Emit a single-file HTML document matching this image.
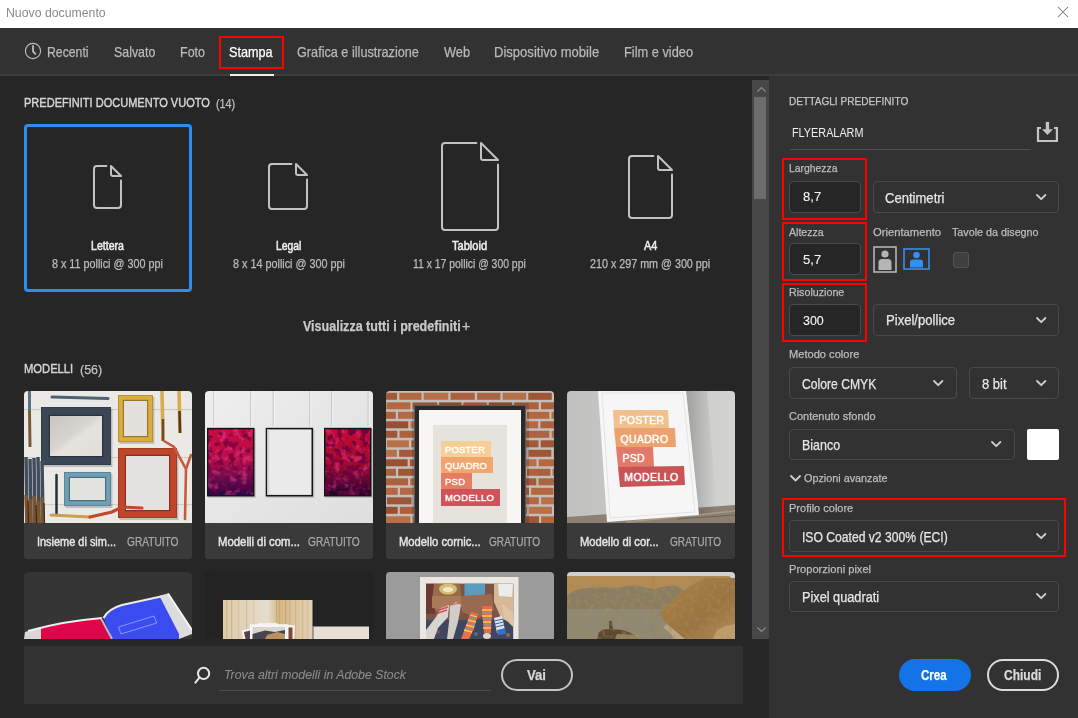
<!DOCTYPE html><html><head><meta charset="utf-8"><style>
html,body{margin:0;padding:0;}
body{width:1078px;height:718px;overflow:hidden;position:relative;background:#262626;font-family:"Liberation Sans",sans-serif;}
.t{position:absolute;white-space:nowrap;line-height:1;transform-origin:0 0;-webkit-text-stroke:0.25px currentColor;}
.b{position:absolute;box-sizing:border-box;}
.th{position:absolute;overflow:hidden;}
</style></head><body>
<div class="b" style="left:0px;top:0px;width:1078px;height:28px;background:#fff;"></div>
<div class="t" style="left:6.2px;top:6.7px;font-size:12px;color:#8a8a8a;transform:scaleX(1.023);-webkit-text-stroke:0;">Nuovo documento</div>
<svg class="b" style="left:1057px;top:6px" width="12" height="12"><path d="M1,1 L11,11 M11,1 L1,11" stroke="#7a7a7a" stroke-width="1.05"/></svg>
<div class="b" style="left:0px;top:28px;width:1078px;height:46px;background:#323232;"></div>
<div class="b" style="left:0px;top:74px;width:1078px;height:2px;background:#3f3f3f;"></div>
<svg class="b" style="left:24px;top:42px" width="18" height="18"><circle cx="9" cy="9" r="7.6" fill="none" stroke="#bdbdbd" stroke-width="1.15"/><path d="M9,3.3 L9,9.3 L11.8,12.3" fill="none" stroke="#c4c4c4" stroke-width="1.7"/></svg>
<div class="t" style="left:47.0px;top:44.7px;font-size:14.5px;color:#b9b9b9;transform:scaleX(0.844);">Recenti</div>
<div class="t" style="left:113.5px;top:44.7px;font-size:14.5px;color:#b9b9b9;transform:scaleX(0.854);">Salvato</div>
<div class="t" style="left:180.2px;top:44.7px;font-size:14.5px;color:#b9b9b9;transform:scaleX(0.862);">Foto</div>
<div class="t" style="left:297.3px;top:44.7px;font-size:14.5px;color:#b9b9b9;transform:scaleX(0.874);">Grafica e illustrazione</div>
<div class="t" style="left:443.6px;top:44.7px;font-size:14.5px;color:#b9b9b9;transform:scaleX(0.880);">Web</div>
<div class="t" style="left:494.0px;top:44.7px;font-size:14.5px;color:#b9b9b9;transform:scaleX(0.900);">Dispositivo mobile</div>
<div class="t" style="left:623.7px;top:44.7px;font-size:14.5px;color:#b9b9b9;transform:scaleX(0.883);">Film e video</div>
<div class="t" style="left:229.4px;top:44.7px;font-size:14.5px;color:#ffffff;transform:scaleX(0.873);">Stampa</div>
<div class="b" style="left:230px;top:74px;width:44px;height:2px;background:#f0f0f0;"></div>
<div class="b" style="left:219px;top:36px;width:65px;height:33px;border:2px solid #ff0000;"></div>
<div class="b" style="left:0px;top:76px;width:752px;height:642px;background:#262626;"></div>
<div class="t" style="left:24.0px;top:97.1px;font-size:12px;color:#d6d6d6;transform:scaleX(0.919);-webkit-text-stroke:0.4px currentColor;">PREDEFINITI DOCUMENTO VUOTO</div>
<div class="t" style="left:215.9px;top:97.6px;font-size:12px;color:#c0c0c0;transform:scaleX(0.895);">(14)</div>
<div class="b" style="left:24px;top:124px;width:168px;height:168px;border:3px solid #2e8ef0;border-radius:4px;"></div>
<svg class="b" style="left:93px;top:165px" width="29" height="44"><path d="M13.4,1 L4,1 Q1,1 1,4 L1,40 Q1,43 4,43 L25,43 Q28,43 28,40 L28,15.6" fill="none" stroke="#c2c2c2" stroke-width="2" stroke-linecap="round"/><path d="M18,1 L28,11 L20,11 Q18,11 18,9 Z" fill="none" stroke="#c2c2c2" stroke-width="2" stroke-linejoin="round"/></svg>
<svg class="b" style="left:268px;top:163px" width="40" height="47"><path d="M23.4,1 L4,1 Q1,1 1,4 L1,43 Q1,46 4,46 L36,46 Q39,46 39,43 L39,16.6" fill="none" stroke="#c2c2c2" stroke-width="2" stroke-linecap="round"/><path d="M28,1 L39,12 L30,12 Q28,12 28,10 Z" fill="none" stroke="#c2c2c2" stroke-width="2" stroke-linejoin="round"/></svg>
<svg class="b" style="left:441px;top:142px" width="58" height="89"><path d="M35.4,1 L4,1 Q1,1 1,4 L1,85 Q1,88 4,88 L54,88 Q57,88 57,85 L57,22.6" fill="none" stroke="#c2c2c2" stroke-width="2" stroke-linecap="round"/><path d="M40,1 L57,18 L42,18 Q40,18 40,16 Z" fill="none" stroke="#c2c2c2" stroke-width="2" stroke-linejoin="round"/></svg>
<svg class="b" style="left:628px;top:155px" width="45" height="64"><path d="M25.4,1 L4,1 Q1,1 1,4 L1,60 Q1,63 4,63 L41,63 Q44,63 44,60 L44,19.6" fill="none" stroke="#c2c2c2" stroke-width="2" stroke-linecap="round"/><path d="M30,1 L44,15 L32,15 Q30,15 30,13 Z" fill="none" stroke="#c2c2c2" stroke-width="2" stroke-linejoin="round"/></svg>
<div class="t" style="left:91.0px;top:240.0px;font-size:12px;color:#f0f0f0;transform:scaleX(0.883);-webkit-text-stroke:0.5px currentColor;">Lettera</div>
<div class="t" style="left:52.3px;top:258.1px;font-size:12px;color:#bcbcbc;transform:scaleX(0.898);">8 x 11 pollici @ 300 ppi</div>
<div class="t" style="left:275.9px;top:240.0px;font-size:12px;color:#f0f0f0;transform:scaleX(0.865);-webkit-text-stroke:0.5px currentColor;">Legal</div>
<div class="t" style="left:232.5px;top:258.1px;font-size:12px;color:#bcbcbc;transform:scaleX(0.901);">8 x 14 pollici @ 300 ppi</div>
<div class="t" style="left:452.3px;top:240.0px;font-size:12px;color:#f0f0f0;transform:scaleX(0.923);-webkit-text-stroke:0.5px currentColor;">Tabloid</div>
<div class="t" style="left:412.9px;top:258.1px;font-size:12px;color:#bcbcbc;transform:scaleX(0.867);">11 x 17 pollici @ 300 ppi</div>
<div class="t" style="left:643.8px;top:240.0px;font-size:12px;color:#f0f0f0;transform:scaleX(0.906);-webkit-text-stroke:0.5px currentColor;">A4</div>
<div class="t" style="left:590.4px;top:258.1px;font-size:12px;color:#bcbcbc;transform:scaleX(0.895);">210 x 297 mm @ 300 ppi</div>
<div class="t" style="left:302.9px;top:318.5px;font-size:14px;color:#c9c9c9;font-weight:bold;transform:scaleX(0.894);">Visualizza tutti i predefiniti</div>
<div class="t" style="left:461.5px;top:318.5px;font-size:14px;color:#c9c9c9;transform:scaleX(1.015);">+</div>
<div class="t" style="left:23.8px;top:363.4px;font-size:12px;color:#d6d6d6;transform:scaleX(0.934);-webkit-text-stroke:0.4px currentColor;">MODELLI</div>
<div class="t" style="left:79.5px;top:364.0px;font-size:12px;color:#c0c0c0;transform:scaleX(1.040);">(56)</div>
<div class="th" style="left:24px;top:391px;width:168px;height:132px;background:transparent;border-radius:4px 4px 0 0;"><svg width="168" height="132" style="display:block"><defs><linearGradient id="g1" x1="0" y1="0" x2="1" y2="1"><stop offset="0" stop-color="#c8c5c0"/><stop offset="0.45" stop-color="#d8d5d0"/><stop offset="0.55" stop-color="#e6e3de"/><stop offset="1" stop-color="#e0ded9"/></linearGradient></defs><rect width="168" height="132" fill="#ebe9e6"/><rect x="0" y="18" width="168" height="1.2" fill="#cfccc8"/><rect x="0" y="66" width="168" height="1.2" fill="#cfccc8"/><rect x="0" y="113" width="168" height="1.2" fill="#cfccc8"/><rect x="18.5" y="18" width="70" height="58" fill="rgba(0,0,0,0.18)"/><rect x="17" y="16" width="70" height="58" fill="#3b4757"/><rect x="26" y="25" width="52" height="40" fill="url(#g1)"/><rect x="25.4" y="24.4" width="53.2" height="41.2" fill="none" stroke="rgba(0,0,0,0.3)" stroke-width="1.2"/><rect x="17.5" y="16.5" width="69" height="57" fill="none" stroke="rgba(0,0,0,0.15)" stroke-width="1"/><rect x="95.5" y="6" width="35" height="47" fill="rgba(0,0,0,0.18)"/><rect x="94" y="4" width="35" height="47" fill="#d9ad3e"/><rect x="100" y="10" width="23" height="35" fill="#e4e1dc"/><rect x="99.4" y="9.4" width="24.2" height="36.2" fill="none" stroke="rgba(0,0,0,0.3)" stroke-width="1.2"/><rect x="94.5" y="4.5" width="34" height="46" fill="none" stroke="rgba(0,0,0,0.15)" stroke-width="1"/><rect x="95.5" y="59" width="59" height="70" fill="rgba(0,0,0,0.18)"/><rect x="94" y="57" width="59" height="70" fill="#c0462a"/><rect x="102" y="65" width="43" height="54" fill="#e4e2de"/><rect x="101.4" y="64.4" width="44.2" height="55.2" fill="none" stroke="rgba(0,0,0,0.3)" stroke-width="1.2"/><rect x="94.5" y="57.5" width="58" height="69" fill="none" stroke="rgba(0,0,0,0.15)" stroke-width="1"/><rect x="41.5" y="83" width="47" height="34" fill="rgba(0,0,0,0.18)"/><rect x="40" y="81" width="47" height="34" fill="#6e9fb4"/><rect x="46" y="87" width="35" height="22" fill="#e4e2de"/><rect x="45.4" y="86.4" width="36.2" height="23.2" fill="none" stroke="rgba(0,0,0,0.3)" stroke-width="1.2"/><rect x="40.5" y="81.5" width="46" height="33" fill="none" stroke="rgba(0,0,0,0.15)" stroke-width="1"/><path d="M28,6 L84,7.5" stroke="#4d6272" stroke-width="3.2" stroke-linecap="round"/><path d="M5.5,0 L5.5,20" stroke="#5b7282" stroke-width="3"/><path d="M5.5,20 L6,56" stroke="#7b5a3a" stroke-width="3"/><path d="M2,66 L3,132 M6,68 L7,132 M10,67 L11,132 M14,66 L15,132 M18,70 L19,132" stroke="#3f4d5c" stroke-width="3.5"/><path d="M2,104 L3,132 M6,108 L7,132 M10,105 L11,132 M14,110 L15,132 M18,106 L19,132" stroke="#7a5430" stroke-width="3.5"/><path d="M4,110 L4.5,132 M12,114 L12.5,132 M20,112 L20.5,132" stroke="#3a2818" stroke-width="1.2"/><path d="M32.5,84 L32.5,124" stroke="#26303a" stroke-width="2.5" stroke-linecap="round"/><path d="M138,0 L139,50" stroke="#d6ad4e" stroke-width="3.6"/><path d="M139,28 L139,50" stroke="#6a4a2a" stroke-width="2.5"/><path d="M155,0 L156,42" stroke="#d6ad4e" stroke-width="3.6"/><path d="M155.5,20 L156,42" stroke="#5a3a22" stroke-width="2.6"/><path d="M140,50 L150,56 L162,78 L167,64 M162,78 L161,128" fill="none" stroke="#c45c40" stroke-width="2.6" stroke-linecap="round"/><path d="M27,124 L66,126" stroke="#c8a050" stroke-width="3.2" stroke-linecap="round"/><path d="M66,126 L88,121 L98,116 L118,117" fill="none" stroke="#c0482c" stroke-width="3.2" stroke-linecap="round"/></svg></div>
<div class="th" style="left:205px;top:391px;width:168px;height:132px;background:transparent;border-radius:4px 4px 0 0;"><svg width="168" height="132" style="display:block"><defs><linearGradient id="w2" x1="0" y1="0" x2="1" y2="1"><stop offset="0" stop-color="#eeeeee"/><stop offset="1" stop-color="#dedede"/></linearGradient><linearGradient id="r2a" x1="0" y1="0" x2="0" y2="1"><stop offset="0" stop-color="#c80c40"/><stop offset="0.45" stop-color="#b80e48"/><stop offset="0.75" stop-color="#6a0c4c"/><stop offset="1" stop-color="#24084a"/></linearGradient><linearGradient id="r2b" x1="0" y1="0" x2="0" y2="1"><stop offset="0" stop-color="#c40a34"/><stop offset="0.5" stop-color="#a40a30"/><stop offset="0.8" stop-color="#580836"/><stop offset="1" stop-color="#1a0428"/></linearGradient><filter id="blot" x="0" y="0" width="100%" height="100%"><feTurbulence type="fractalNoise" baseFrequency="0.16" numOctaves="3" seed="5"/><feColorMatrix type="matrix" values="0 0 0 0 0.14  0 0 0 0 0  0 0 0 0 0.05  5 0 0 0 -2.4"/></filter><filter id="blot2" x="0" y="0" width="100%" height="100%"><feTurbulence type="fractalNoise" baseFrequency="0.14" numOctaves="3" seed="9"/><feColorMatrix type="matrix" values="0 0 0 0 0.95  0 0 0 0 0.05  0 0 0 0 0.3  0 4.5 0 0 -2.2"/></filter></defs><rect width="168" height="132" fill="url(#w2)"/><rect x="8" y="0" width="1.3" height="35" fill="#c8c8c8" opacity="0.9"/><rect x="9.3" y="0" width="1" height="35" fill="#f8f8f8" opacity="0.8"/><rect x="45" y="0" width="1.3" height="35" fill="#c8c8c8" opacity="0.9"/><rect x="46.3" y="0" width="1" height="35" fill="#f8f8f8" opacity="0.8"/><rect x="67.5" y="0" width="1.3" height="35" fill="#c8c8c8" opacity="0.9"/><rect x="68.8" y="0" width="1" height="35" fill="#f8f8f8" opacity="0.8"/><rect x="104" y="0" width="1.3" height="35" fill="#c8c8c8" opacity="0.9"/><rect x="105.3" y="0" width="1" height="35" fill="#f8f8f8" opacity="0.8"/><rect x="126" y="0" width="1.3" height="35" fill="#c8c8c8" opacity="0.9"/><rect x="127.3" y="0" width="1" height="35" fill="#f8f8f8" opacity="0.8"/><rect x="162.5" y="0" width="1.3" height="35" fill="#c8c8c8" opacity="0.9"/><rect x="163.8" y="0" width="1" height="35" fill="#f8f8f8" opacity="0.8"/><rect x="3" y="38" width="48" height="69" fill="rgba(0,0,0,0.12)"/><rect x="2" y="36.8" width="47.5" height="68.7" fill="#141414"/><rect x="3.6" y="38.4" width="44.3" height="65.5" fill="url(#r2a)"/><rect x="3.6" y="38.4" width="44.3" height="65.5" filter="url(#blot2)" opacity="0.45"/><rect x="3.6" y="38.4" width="44.3" height="65.5" filter="url(#blot)" opacity="0.75"/><rect x="120" y="38" width="48" height="69" fill="rgba(0,0,0,0.12)"/><rect x="119" y="36.8" width="47.5" height="68.7" fill="#141414"/><rect x="120.6" y="38.4" width="44.3" height="65.5" fill="url(#r2b)"/><rect x="120.6" y="38.4" width="44.3" height="65.5" filter="url(#blot2)" opacity="0.45"/><rect x="120.6" y="38.4" width="44.3" height="65.5" filter="url(#blot)" opacity="0.95"/><rect x="61.5" y="38" width="48" height="69" fill="rgba(0,0,0,0.12)"/><rect x="60.7" y="36.8" width="47.4" height="68.7" fill="#161616"/><rect x="62.3" y="38.4" width="44.2" height="65.5" fill="#eaeaea"/><rect x="62.3" y="38.4" width="2" height="65.5" fill="#d4d4d4"/></svg></div>
<div class="th" style="left:386px;top:391px;width:168px;height:132px;background:transparent;border-radius:4px 4px 0 0;"><svg width="168" height="132" style="display:block"><rect width="168" height="132" fill="#c4beb8"/><rect x="-0.2" y="-7.7" width="23.4" height="7" fill="#985034"/><rect x="25.4" y="-7.7" width="22.6" height="7" fill="#b87048"/><rect x="50.2" y="-7.7" width="23.9" height="7" fill="#985034"/><rect x="76.2" y="-7.7" width="22.3" height="7" fill="#a45a3a"/><rect x="100.7" y="-7.7" width="22.4" height="7" fill="#9e5636"/><rect x="125.3" y="-7.7" width="23.8" height="7" fill="#ac603e"/><rect x="151.3" y="-7.7" width="24.9" height="7" fill="#b26a46"/><rect x="-12.8" y="1.8" width="23.9" height="7" fill="#a45a3a"/><rect x="13.3" y="1.8" width="22.2" height="7" fill="#b4683f"/><rect x="37.7" y="1.8" width="24.6" height="7" fill="#b87048"/><rect x="64.5" y="1.8" width="24.3" height="7" fill="#ac603e"/><rect x="91.1" y="1.8" width="23.3" height="7" fill="#aa6444"/><rect x="116.6" y="1.8" width="23.6" height="7" fill="#b87048"/><rect x="142.3" y="1.8" width="23.5" height="7" fill="#9e5636"/><rect x="168.0" y="1.8" width="23.4" height="7" fill="#b4683f"/><rect x="0.4" y="11.3" width="24.1" height="7" fill="#b4683f"/><rect x="26.7" y="11.3" width="24.3" height="7" fill="#aa6444"/><rect x="53.2" y="11.3" width="22.1" height="7" fill="#9e5636"/><rect x="77.5" y="11.3" width="23.2" height="7" fill="#b4683f"/><rect x="102.9" y="11.3" width="23.2" height="7" fill="#9e5636"/><rect x="128.2" y="11.3" width="24.5" height="7" fill="#ac603e"/><rect x="155.0" y="11.3" width="22.6" height="7" fill="#ac603e"/><rect x="-13.6" y="20.8" width="23.4" height="7" fill="#ac603e"/><rect x="12.0" y="20.8" width="23.3" height="7" fill="#b26a46"/><rect x="37.5" y="20.8" width="24.3" height="7" fill="#b87048"/><rect x="64.0" y="20.8" width="23.0" height="7" fill="#9e5636"/><rect x="89.2" y="20.8" width="23.0" height="7" fill="#9e5636"/><rect x="114.4" y="20.8" width="24.3" height="7" fill="#b26a46"/><rect x="140.9" y="20.8" width="22.4" height="7" fill="#b4683f"/><rect x="165.5" y="20.8" width="22.0" height="7" fill="#b4683f"/><rect x="-0.2" y="30.3" width="22.5" height="7" fill="#985034"/><rect x="24.5" y="30.3" width="23.3" height="7" fill="#b87048"/><rect x="50.1" y="30.3" width="25.0" height="7" fill="#b87048"/><rect x="77.2" y="30.3" width="23.3" height="7" fill="#a45a3a"/><rect x="102.7" y="30.3" width="22.3" height="7" fill="#b26a46"/><rect x="127.2" y="30.3" width="25.0" height="7" fill="#b26a46"/><rect x="154.4" y="30.3" width="22.8" height="7" fill="#ac603e"/><rect x="-13.7" y="39.8" width="25.0" height="7" fill="#9e5636"/><rect x="13.5" y="39.8" width="22.6" height="7" fill="#ac603e"/><rect x="38.3" y="39.8" width="25.0" height="7" fill="#b26a46"/><rect x="65.5" y="39.8" width="22.1" height="7" fill="#b4683f"/><rect x="89.8" y="39.8" width="22.6" height="7" fill="#a45a3a"/><rect x="114.7" y="39.8" width="22.0" height="7" fill="#9e5636"/><rect x="138.9" y="39.8" width="24.5" height="7" fill="#aa6444"/><rect x="165.6" y="39.8" width="22.2" height="7" fill="#b26a46"/><rect x="0.9" y="49.3" width="22.0" height="7" fill="#b87048"/><rect x="25.2" y="49.3" width="23.1" height="7" fill="#aa6444"/><rect x="50.5" y="49.3" width="22.4" height="7" fill="#985034"/><rect x="75.1" y="49.3" width="24.5" height="7" fill="#985034"/><rect x="101.8" y="49.3" width="24.6" height="7" fill="#a45a3a"/><rect x="128.6" y="49.3" width="23.9" height="7" fill="#a45a3a"/><rect x="154.7" y="49.3" width="24.7" height="7" fill="#9e5636"/><rect x="-13.3" y="58.8" width="24.2" height="7" fill="#b87048"/><rect x="13.1" y="58.8" width="24.2" height="7" fill="#a45a3a"/><rect x="39.5" y="58.8" width="24.1" height="7" fill="#b87048"/><rect x="65.8" y="58.8" width="24.6" height="7" fill="#b26a46"/><rect x="92.6" y="58.8" width="23.3" height="7" fill="#b4683f"/><rect x="118.1" y="58.8" width="22.3" height="7" fill="#b4683f"/><rect x="142.6" y="58.8" width="22.7" height="7" fill="#9e5636"/><rect x="167.6" y="58.8" width="22.8" height="7" fill="#b26a46"/><rect x="-1.3" y="68.3" width="22.9" height="7" fill="#985034"/><rect x="23.8" y="68.3" width="24.8" height="7" fill="#a45a3a"/><rect x="50.8" y="68.3" width="22.4" height="7" fill="#b4683f"/><rect x="75.4" y="68.3" width="23.7" height="7" fill="#985034"/><rect x="101.3" y="68.3" width="22.8" height="7" fill="#b4683f"/><rect x="126.3" y="68.3" width="24.2" height="7" fill="#b87048"/><rect x="152.7" y="68.3" width="22.8" height="7" fill="#b4683f"/><rect x="-12.1" y="77.8" width="22.1" height="7" fill="#ac603e"/><rect x="12.2" y="77.8" width="23.1" height="7" fill="#9e5636"/><rect x="37.5" y="77.8" width="22.3" height="7" fill="#a45a3a"/><rect x="62.0" y="77.8" width="24.7" height="7" fill="#a45a3a"/><rect x="88.9" y="77.8" width="24.0" height="7" fill="#aa6444"/><rect x="115.0" y="77.8" width="23.8" height="7" fill="#a45a3a"/><rect x="141.0" y="77.8" width="23.4" height="7" fill="#ac603e"/><rect x="166.6" y="77.8" width="24.1" height="7" fill="#aa6444"/><rect x="-1.7" y="87.3" width="23.8" height="7" fill="#ac603e"/><rect x="24.3" y="87.3" width="23.4" height="7" fill="#b4683f"/><rect x="50.0" y="87.3" width="23.0" height="7" fill="#9e5636"/><rect x="75.1" y="87.3" width="22.2" height="7" fill="#b4683f"/><rect x="99.5" y="87.3" width="24.2" height="7" fill="#aa6444"/><rect x="125.9" y="87.3" width="24.4" height="7" fill="#a45a3a"/><rect x="152.5" y="87.3" width="23.1" height="7" fill="#aa6444"/><rect x="-12.9" y="96.8" width="24.6" height="7" fill="#b4683f"/><rect x="14.0" y="96.8" width="24.8" height="7" fill="#b26a46"/><rect x="41.0" y="96.8" width="24.6" height="7" fill="#ac603e"/><rect x="67.8" y="96.8" width="23.9" height="7" fill="#ac603e"/><rect x="93.9" y="96.8" width="23.1" height="7" fill="#b26a46"/><rect x="119.2" y="96.8" width="23.8" height="7" fill="#ac603e"/><rect x="145.2" y="96.8" width="22.3" height="7" fill="#b4683f"/><rect x="0.9" y="106.3" width="24.6" height="7" fill="#9e5636"/><rect x="27.7" y="106.3" width="23.2" height="7" fill="#aa6444"/><rect x="53.1" y="106.3" width="23.3" height="7" fill="#985034"/><rect x="78.6" y="106.3" width="23.6" height="7" fill="#b4683f"/><rect x="104.3" y="106.3" width="22.9" height="7" fill="#ac603e"/><rect x="129.5" y="106.3" width="23.4" height="7" fill="#b4683f"/><rect x="155.1" y="106.3" width="24.9" height="7" fill="#b87048"/><rect x="-11.1" y="115.8" width="22.8" height="7" fill="#985034"/><rect x="13.8" y="115.8" width="23.1" height="7" fill="#ac603e"/><rect x="39.1" y="115.8" width="24.0" height="7" fill="#a45a3a"/><rect x="65.4" y="115.8" width="23.6" height="7" fill="#b87048"/><rect x="91.1" y="115.8" width="24.0" height="7" fill="#aa6444"/><rect x="117.3" y="115.8" width="23.5" height="7" fill="#985034"/><rect x="143.0" y="115.8" width="23.0" height="7" fill="#b87048"/><rect x="168.2" y="115.8" width="22.6" height="7" fill="#9e5636"/><rect x="-0.1" y="125.3" width="24.6" height="7" fill="#b87048"/><rect x="26.7" y="125.3" width="22.7" height="7" fill="#b26a46"/><rect x="51.6" y="125.3" width="22.6" height="7" fill="#aa6444"/><rect x="76.4" y="125.3" width="23.5" height="7" fill="#a45a3a"/><rect x="102.1" y="125.3" width="24.1" height="7" fill="#ac603e"/><rect x="128.5" y="125.3" width="24.5" height="7" fill="#9e5636"/><rect x="155.1" y="125.3" width="23.4" height="7" fill="#b4683f"/><rect x="-11.6" y="134.8" width="24.5" height="7" fill="#b87048"/><rect x="15.1" y="134.8" width="23.9" height="7" fill="#b26a46"/><rect x="41.1" y="134.8" width="24.0" height="7" fill="#985034"/><rect x="67.4" y="134.8" width="23.0" height="7" fill="#985034"/><rect x="92.5" y="134.8" width="22.8" height="7" fill="#ac603e"/><rect x="117.6" y="134.8" width="24.0" height="7" fill="#ac603e"/><rect x="143.8" y="134.8" width="23.7" height="7" fill="#9e5636"/><rect x="26" y="12" width="117" height="130" fill="rgba(0,0,0,0.15)"/><rect x="28" y="14" width="112" height="120" fill="#2a2a2a"/><rect x="28.5" y="14.5" width="111" height="120" fill="none" stroke="#5a5a5a" stroke-width="1"/><rect x="33" y="19" width="102" height="115" fill="#f7f6f2"/><rect x="47" y="34" width="74" height="100" fill="#e6e3de"/><rect x="55" y="50" width="50" height="16" fill="#f6cf96"/><rect x="55" y="66" width="52" height="16" fill="#f1a66f"/><rect x="55" y="82" width="31" height="16" fill="#e67c64"/><rect x="55" y="98" width="59" height="17" fill="#cf5358"/><text x="59" y="61.8" textLength="40" lengthAdjust="spacing" style="font-family:Liberation Sans;font-size:9.5px;fill:#fff;stroke:#fff;stroke-width:0.35px">POSTER</text><text x="59" y="77.8" textLength="42" lengthAdjust="spacing" style="font-family:Liberation Sans;font-size:9.5px;fill:#fff;stroke:#fff;stroke-width:0.35px">QUADRO</text><text x="59" y="93.8" textLength="20" lengthAdjust="spacing" style="font-family:Liberation Sans;font-size:9.5px;fill:#fff;stroke:#fff;stroke-width:0.35px">PSD</text><text x="59" y="110.3" textLength="49" lengthAdjust="spacing" style="font-family:Liberation Sans;font-size:9.5px;fill:#fff;stroke:#fff;stroke-width:0.35px">MODELLO</text></svg></div>
<div class="th" style="left:567px;top:391px;width:168px;height:132px;background:transparent;border-radius:4px 4px 0 0;"><svg width="168" height="132" style="display:block"><defs><linearGradient id="w4" x1="0" y1="0" x2="1" y2="0"><stop offset="0" stop-color="#c0c0be"/><stop offset="0.5" stop-color="#cacac8"/><stop offset="1" stop-color="#d2d2d0"/></linearGradient><linearGradient id="sh4" x1="0" y1="0" x2="1" y2="0"><stop offset="0" stop-color="#000" stop-opacity="0.22"/><stop offset="1" stop-color="#000" stop-opacity="0"/></linearGradient></defs><rect width="168" height="132" fill="url(#w4)"/><polygon points="0,126 168,114 168,132 0,132" fill="#8c8072"/><path d="M60,131 L168,120" stroke="#a89a88" stroke-width="1.5"/><path d="M110,128 L168,124" stroke="#6e6254" stroke-width="1"/><polygon points="119,0 132,124 150,120 140,0" fill="url(#sh4)"/><polygon points="31,0 119,0 132,124 40,131" fill="#f6f6f6"/><polygon points="35,2 116,2 128,121 43,127" fill="none" stroke="#dedede" stroke-width="0.8"/><polygon points="46,19 101,19 102,37 47,37" fill="#f2c08c"/><polygon points="47,37 108,37 109,56 49,56" fill="#eca26e"/><polygon points="49,56 86,56 87,76 51,76" fill="#e27a67"/><polygon points="51,76 117,75 118,94 53,96" fill="#c95457"/><text x="52.6" y="33.4" textLength="44.4" lengthAdjust="spacing" style="font-family:Liberation Sans;font-size:10.5px;fill:#fff;stroke:#fff;stroke-width:0.4px">POSTER</text><text x="53.6" y="51.6" textLength="47.5" lengthAdjust="spacing" style="font-family:Liberation Sans;font-size:10.5px;fill:#fff;stroke:#fff;stroke-width:0.4px">QUADRO</text><text x="55.6" y="71.4" textLength="22" lengthAdjust="spacing" style="font-family:Liberation Sans;font-size:10.5px;fill:#fff;stroke:#fff;stroke-width:0.4px">PSD</text><text x="57.2" y="90" textLength="54" lengthAdjust="spacing" style="font-family:Liberation Sans;font-size:10.5px;fill:#fff;stroke:#fff;stroke-width:0.4px">MODELLO</text></svg></div>
<div class="th" style="left:24px;top:572px;width:168px;height:67px;background:transparent;border-radius:4px 4px 0 0;"><svg width="168" height="67" style="display:block"><rect width="168" height="67" fill="#353535"/><polygon points="136,23.5 144,21.5 168,58 168,62 155,67 136,67" fill="#dcdcdc"/><path d="M144,21.5 L168,58" stroke="#f4f4f4" stroke-width="2"/><polygon points="1,60 17,55 17,67 0,67" fill="#d8d8d8"/><path d="M79.5,46 Q84,37 98,33 L136,25 L155,62 L155,67 L88,67 Z" fill="#3a4cf0"/><path d="M79.5,46 Q84,37 98,33 L137,24.5" fill="none" stroke="#ececec" stroke-width="2"/><polygon points="94.5,55 130,44 132.7,51 97,62" fill="none" stroke="#aab4ff" stroke-width="0.7"/><path d="M17,56 Q40,50 76,46.5 L87.5,67 L17,67 Z" fill="#e0044a"/><path d="M4,59 Q40,49 78,46" fill="none" stroke="#eeeeee" stroke-width="2"/><path d="M77,46.5 L88,67" stroke="#b8b8c8" stroke-width="2"/></svg></div>
<div class="th" style="left:205px;top:572px;width:168px;height:67px;background:transparent;border-radius:4px 4px 0 0;"><svg width="168" height="67" style="display:block"><rect width="168" height="67" fill="#232323"/><defs><linearGradient id="wd" x1="0" y1="0" x2="1" y2="0"><stop offset="0" stop-color="#dccaa8"/><stop offset="0.25" stop-color="#e2d4bc"/><stop offset="0.5" stop-color="#e4dccc"/><stop offset="0.62" stop-color="#d6b888"/><stop offset="0.8" stop-color="#dcc49e"/><stop offset="1" stop-color="#e0d0b4"/></linearGradient></defs><rect x="18" y="28" width="89.5" height="39" fill="url(#wd)"/><rect x="21" y="28" width="1.2" height="39" fill="#b88e58" opacity="0.3"/><rect x="26" y="28" width="1.2" height="39" fill="#b88e58" opacity="0.4"/><rect x="33" y="28" width="1.2" height="39" fill="#b88e58" opacity="0.25"/><rect x="41" y="28" width="1.2" height="39" fill="#b88e58" opacity="0.35"/><rect x="48" y="28" width="1.2" height="39" fill="#b88e58" opacity="0.2"/><rect x="71" y="28" width="1.2" height="39" fill="#b88e58" opacity="0.5"/><rect x="74" y="28" width="1.2" height="39" fill="#b88e58" opacity="0.4"/><rect x="80" y="28" width="1.2" height="39" fill="#b88e58" opacity="0.5"/><rect x="84" y="28" width="1.2" height="39" fill="#b88e58" opacity="0.35"/><rect x="90" y="28" width="1.2" height="39" fill="#b88e58" opacity="0.3"/><rect x="97" y="28" width="1.2" height="39" fill="#b88e58" opacity="0.3"/><rect x="102" y="28" width="1.2" height="39" fill="#b88e58" opacity="0.25"/><rect x="107.5" y="54.5" width="56.5" height="12.5" fill="#e8e0d4"/><rect x="107.5" y="54.5" width="1.5" height="12.5" fill="#555" opacity="0.5"/><rect x="53" y="50.8" width="19.5" height="2" fill="#f0f0f0"/><polygon points="36.5,58.5 45.5,56 46,67 38.5,67" fill="#f2f2f2"/><polygon points="39,60 45.5,58.5 45.5,67 40.5,67" fill="#5a4048"/><polygon points="82,52.5 90,53.5 89,67 82,67" fill="#f2f2f2"/><rect x="83.5" y="55.5" width="4" height="11.5" fill="#7a4a38"/><rect x="45" y="52.2" width="37.7" height="14.8" fill="#f4f4f4"/><rect x="47.5" y="55" width="32.5" height="12" fill="#d8d6cc"/><path d="M47.5,62 L60,58.5 L70,60 L80,58 L80,67 L47.5,67 Z" fill="#46444c"/><path d="M62,63 L72,60 L80,62 L80,67 L60,67 Z" fill="#d0a060" opacity="0.85"/></svg></div>
<div class="th" style="left:386px;top:572px;width:168px;height:67px;background:transparent;border-radius:4px 4px 0 0;"><svg width="168" height="67" style="display:block"><rect width="168" height="67" fill="#9b9b9b"/><rect x="34" y="5" width="98.5" height="62" fill="#ebe8e2"/><rect x="40" y="11.8" width="87.2" height="55.2" fill="#474a5e"/><rect x="40" y="11.8" width="87.2" height="36" fill="#7a5444"/><rect x="40" y="11.8" width="9" height="30" fill="#6a3a34"/><path d="M40,52 L60,48 L80,50 L100,46 L127,50 L127,67 L40,67 Z" fill="#3e4660"/><circle cx="52" cy="60" r="2" fill="#c05050" opacity="0.6"/><circle cx="90" cy="62" r="2" fill="#50a070" opacity="0.6"/><circle cx="122" cy="63" r="2" fill="#c08040" opacity="0.6"/><path d="M48,11.8 L74,11.8 L76,30 L70,38 L50,40 L46,30 Z" fill="#9a6a4c"/><ellipse cx="62" cy="17" rx="9" ry="5.5" fill="#d4be72"/><ellipse cx="62" cy="17.5" rx="5" ry="2.5" fill="#f0e8c8"/><rect x="78.5" y="11.8" width="20.5" height="12.5" fill="#5a9cc0"/><path d="M74,24 L106,22 L108,38 L92,46 L76,40 Z" fill="#9a6a50"/><path d="M46,24 L74,24 L76,34 L60,38 L46,36 Z" fill="#a87a58"/><path d="M108,11.8 L127.2,11.8 L127.2,52 L115,46 L108,30 Z" fill="#d6b898"/><polygon points="112,11.8 127,11.8 126,25 113,24" fill="#ececec"/><polygon points="40,67 40,58 50,45 55,36 63,33 62,45 52,56 48,67" fill="#d8d4d0"/><path d="M53,38 L62,35 M52,41 L61,38" stroke="#d85050" stroke-width="1.6"/><polygon points="61,67 63,50 64,34 70,30 75,33 72,50 67,67" fill="#d0ccc8"/><path d="M64,33 L74,31" stroke="#d86060" stroke-width="1.2"/><polygon points="75,67 79,56 85,40 92,42 88,57 83,67" fill="#e8704a"/><path d="M84,43 L91,45 M82,48 L90,50 M80,53 L88,55 M78,58 L86,60" stroke="#f0d048" stroke-width="1.3"/><path d="M83,45.5 L90,47.5 M81,50.5 L89,52.5 M79,55.5 L87,57.5" stroke="#5a9ad0" stroke-width="1"/><polygon points="96,34 106,34 105,61 98,61" fill="#e86a48"/><path d="M96,38 L106,38 M96,44 L106,44 M97,50 L105,50 M97,56 L105,56" stroke="#f2d050" stroke-width="1.4"/><path d="M96,41 L106,41 M96,47 L106,47 M97,53 L105,53" stroke="#6aa0d0" stroke-width="1.1"/><ellipse cx="101" cy="64" rx="4" ry="3" fill="#e0d8c8"/><polygon points="108,46 116,44 119,58 111,61" fill="#e4e6ea"/><path d="M108.5,49 L117,47 M109,52 L117.5,50 M110,55 L118,53" stroke="#3a6aa8" stroke-width="1.2"/><polygon points="111,58 119,56 120,62 112,63" fill="#3a70c8"/><polygon points="116,32 127.2,40 127.2,55 118,46" fill="#e0c4a4"/></svg></div>
<div class="th" style="left:567px;top:572px;width:168px;height:67px;background:transparent;border-radius:4px 4px 0 0;"><svg width="168" height="67" style="display:block"><rect width="168" height="67" fill="#d0d0d0"/><defs><linearGradient id="sk" x1="0" y1="0" x2="0" y2="1"><stop offset="0" stop-color="#b48a52"/><stop offset="1" stop-color="#a89070"/></linearGradient><linearGradient id="mt" x1="0" y1="0" x2="1" y2="1"><stop offset="0" stop-color="#a8844a"/><stop offset="0.6" stop-color="#9a7440"/><stop offset="1" stop-color="#b08a56"/></linearGradient><filter id="sep" x="0" y="0" width="100%" height="100%"><feTurbulence type="fractalNoise" baseFrequency="0.22" numOctaves="3" seed="3"/><feColorMatrix type="matrix" values="0 0 0 0 0.4  0 0 0 0 0.27  0 0 0 0 0.1  4 0 0 0 -1.9"/></filter><clipPath id="c8"><path d="M0,4 L162,4 L168,9 L168,67 L0,67 Z"/></clipPath></defs><path d="M0,4 L162,4 L168,9 L168,67 L0,67 Z" fill="url(#sk)"/><path d="M0,24 Q6,18 14,17 Q30,14 50,16 Q62,13 72,14 Q80,16 88,17 Q100,13 110,14 L116,18 L100,38 L0,38 Z" fill="#8a7e62"/><rect x="0" y="37" width="105" height="30" fill="#8e8874"/><path d="M92,42 Q98,34 108,26 Q120,14 138,6 L168,6 L168,67 L118,67 Q106,58 98,50 Z" fill="url(#mt)"/><path d="M150,58 L158,54 L168,52 L168,67 L146,67 Z" fill="#c4a274" opacity="0.8"/><path d="M100,52 Q110,60 118,67 L108,67 Q102,60 96,55 Z" fill="#c8b898" opacity="0.6"/><path d="M30,67 L32,60 L38,57 L42,57 L42,49 L45,49 L46,57 L56,58 L66,62 L74,67 Z" fill="#5c4a32"/><path d="M50,62 L70,63 L74,67 L48,67 Z" fill="#c8b890" opacity="0.5"/><path d="M86,5 L86,67" stroke="#9a8058" stroke-width="0.6"/><g clip-path="url(#c8)"><rect x="0" y="0" width="168" height="67" filter="url(#sep)" opacity="0.4"/></g></svg></div>
<div class="b" style="left:24px;top:523px;width:168px;height:36px;background:#3a3a3a;border-radius:0 0 3px 3px;"></div>
<div class="t" style="left:36.6px;top:536.0px;font-size:12.5px;color:#e6e6e6;transform:scaleX(0.875);-webkit-text-stroke:0.45px currentColor;">Insieme di sim...</div>
<div class="t" style="left:126.8px;top:536.0px;font-size:12.5px;color:#a9a9a9;transform:scaleX(0.812);">GRATUITO</div>
<div class="b" style="left:205px;top:523px;width:168px;height:36px;background:#3a3a3a;border-radius:0 0 3px 3px;"></div>
<div class="t" style="left:217.5px;top:536.0px;font-size:12.5px;color:#e6e6e6;transform:scaleX(0.908);-webkit-text-stroke:0.45px currentColor;">Modelli di com...</div>
<div class="t" style="left:307.5px;top:536.0px;font-size:12.5px;color:#a9a9a9;transform:scaleX(0.815);">GRATUITO</div>
<div class="b" style="left:386px;top:523px;width:168px;height:36px;background:#3a3a3a;border-radius:0 0 3px 3px;"></div>
<div class="t" style="left:398.8px;top:536.0px;font-size:12.5px;color:#e6e6e6;transform:scaleX(0.897);-webkit-text-stroke:0.45px currentColor;">Modello cornic...</div>
<div class="t" style="left:489.0px;top:536.0px;font-size:12.5px;color:#a9a9a9;transform:scaleX(0.807);">GRATUITO</div>
<div class="b" style="left:567px;top:523px;width:168px;height:36px;background:#3a3a3a;border-radius:0 0 3px 3px;"></div>
<div class="t" style="left:579.9px;top:536.0px;font-size:12.5px;color:#e6e6e6;transform:scaleX(0.898);-webkit-text-stroke:0.45px currentColor;">Modello di cor...</div>
<div class="t" style="left:669.7px;top:536.0px;font-size:12.5px;color:#a9a9a9;transform:scaleX(0.807);">GRATUITO</div>
<div class="b" style="left:752px;top:80px;width:17px;height:559px;background:#474747;"></div>
<div class="b" style="left:754px;top:97px;width:12px;height:102px;background:#6c6c6c;"></div>
<svg class="b" style="left:756px;top:86px" width="11" height="7"><polyline points="1.5,5.5 5.5,1.5 9.5,5.5" fill="none" stroke="#8c8c8c" stroke-width="1.2"/></svg>
<svg class="b" style="left:756px;top:626px" width="11" height="7"><polyline points="1.5,1.5 5.5,5.5 9.5,1.5" fill="none" stroke="#8c8c8c" stroke-width="1.2"/></svg>
<div class="b" style="left:24px;top:646px;width:719px;height:58px;background:#323232;"></div>
<svg class="b" style="left:192px;top:666px" width="20" height="20"><circle cx="11.6" cy="7.4" r="5.6" fill="none" stroke="#e8e8e8" stroke-width="2"/><path d="M7.6,11.4 L3.4,16.6" stroke="#e8e8e8" stroke-width="2" stroke-linecap="round"/></svg>
<div class="t" style="left:223.5px;top:668.2px;font-size:13.5px;color:#8c8c8c;font-style:italic;transform:scaleX(0.912);-webkit-text-stroke:0.1px currentColor;">Trova altri modelli in Adobe Stock</div>
<div class="b" style="left:219px;top:690px;width:272px;height:1px;background:#4c4c4c;"></div>
<div class="b" style="left:501px;top:659px;width:72px;height:32px;border:2px solid #c4c4c4;border-radius:16px;"></div>
<div class="t" style="left:527.0px;top:667.6px;font-size:14px;color:#d6d6d6;font-weight:bold;transform:scaleX(0.939);">Vai</div>
<div class="b" style="left:769px;top:76px;width:309px;height:642px;background:#323232;"></div>
<div class="t" style="left:788.8px;top:95.6px;font-size:11.5px;color:#c6c6c6;transform:scaleX(0.879);">DETTAGLI PREDEFINITO</div>
<div class="t" style="left:791.8px;top:127.2px;font-size:12.5px;color:#f0f0f0;transform:scaleX(0.867);-webkit-text-stroke:0;">FLYERALARM</div>
<div class="b" style="left:790px;top:149px;width:241px;height:1px;background:#505050;"></div>
<svg class="b" style="left:1036px;top:121px" width="23" height="22"><polyline points="5,7 2,7 2,20 20.9,20 20.9,7 18,7" fill="none" stroke="#c4c4c4" stroke-width="2.2"/><rect x="9.8" y="0.9" width="3.3" height="9" fill="#c4c4c4"/><polygon points="6,8.2 17,8.2 11.5,14" fill="#c4c4c4"/></svg>
<div class="t" style="left:789.1px;top:163.2px;font-size:11.5px;color:#bdbdbd;transform:scaleX(0.903);">Larghezza</div>
<div class="t" style="left:789.1px;top:226.6px;font-size:11.5px;color:#bdbdbd;transform:scaleX(0.920);">Altezza</div>
<div class="t" style="left:872.7px;top:226.6px;font-size:11.5px;color:#bdbdbd;transform:scaleX(0.976);">Orientamento</div>
<div class="t" style="left:951.8px;top:226.6px;font-size:11.5px;color:#bdbdbd;transform:scaleX(0.933);">Tavole da disegno</div>
<div class="t" style="left:789.1px;top:286.6px;font-size:11.5px;color:#bdbdbd;transform:scaleX(0.930);">Risoluzione</div>
<div class="t" style="left:789.1px;top:349.3px;font-size:11.5px;color:#bdbdbd;transform:scaleX(0.965);">Metodo colore</div>
<div class="t" style="left:789.1px;top:410.5px;font-size:11.5px;color:#bdbdbd;transform:scaleX(0.955);">Contenuto sfondo</div>
<div class="t" style="left:803.7px;top:472.6px;font-size:11.5px;color:#bdbdbd;transform:scaleX(0.940);">Opzioni avanzate</div>
<div class="t" style="left:789.1px;top:502.6px;font-size:11.5px;color:#bdbdbd;transform:scaleX(0.957);">Profilo colore</div>
<div class="t" style="left:789.1px;top:563.8px;font-size:11.5px;color:#bdbdbd;transform:scaleX(0.965);">Proporzioni pixel</div>
<div class="b" style="left:789px;top:181px;width:72px;height:32px;background:#262626;border:1px solid #4a4a4a;border-radius:4px;"></div>
<div class="t" style="left:803.2px;top:190.2px;font-size:13.5px;color:#f4f4f4;transform:scaleX(0.970);-webkit-text-stroke:0.1px currentColor;">8,7</div>
<div class="b" style="left:789px;top:243px;width:72px;height:32px;background:#262626;border:1px solid #4a4a4a;border-radius:4px;"></div>
<div class="t" style="left:803.2px;top:252.9px;font-size:13.5px;color:#f4f4f4;transform:scaleX(0.970);-webkit-text-stroke:0.1px currentColor;">5,7</div>
<div class="b" style="left:789px;top:304px;width:72px;height:32px;background:#262626;border:1px solid #4a4a4a;border-radius:4px;"></div>
<div class="t" style="left:803.2px;top:313.5px;font-size:13.5px;color:#f4f4f4;transform:scaleX(0.923);-webkit-text-stroke:0.1px currentColor;">300</div>
<div class="b" style="left:873px;top:181px;width:186px;height:32px;background:#323232;border:1px solid #4a4a4a;border-radius:4px;"></div>
<div class="t" style="left:885.3px;top:190.7px;font-size:14px;color:#e6e6e6;transform:scaleX(0.933);">Centimetri</div>
<svg class="b" style="left:1034.5px;top:192.9px" width="12.4" height="8.2"><polyline points="2,2 6.2,6.2 10.4,2" fill="none" stroke="#d0d0d0" stroke-width="1.8" stroke-linecap="round" stroke-linejoin="round"/></svg>
<div class="b" style="left:873px;top:304px;width:186px;height:32px;background:#323232;border:1px solid #4a4a4a;border-radius:4px;"></div>
<div class="t" style="left:885.8px;top:313.4px;font-size:14px;color:#e6e6e6;transform:scaleX(0.935);">Pixel/pollice</div>
<svg class="b" style="left:1034.5px;top:315.9px" width="12.4" height="8.2"><polyline points="2,2 6.2,6.2 10.4,2" fill="none" stroke="#d0d0d0" stroke-width="1.8" stroke-linecap="round" stroke-linejoin="round"/></svg>
<div class="b" style="left:789px;top:367px;width:168px;height:32px;background:#323232;border:1px solid #4a4a4a;border-radius:4px;"></div>
<div class="t" style="left:801.8px;top:376.9px;font-size:14px;color:#e6e6e6;transform:scaleX(0.868);">Colore CMYK</div>
<svg class="b" style="left:932.1px;top:378.9px" width="12.4" height="8.2"><polyline points="2,2 6.2,6.2 10.4,2" fill="none" stroke="#d0d0d0" stroke-width="1.8" stroke-linecap="round" stroke-linejoin="round"/></svg>
<div class="b" style="left:969px;top:367px;width:90px;height:32px;background:#323232;border:1px solid #4a4a4a;border-radius:4px;"></div>
<div class="t" style="left:981.8px;top:376.9px;font-size:14px;color:#e6e6e6;transform:scaleX(0.926);">8 bit</div>
<svg class="b" style="left:1034.5px;top:378.9px" width="12.4" height="8.2"><polyline points="2,2 6.2,6.2 10.4,2" fill="none" stroke="#d0d0d0" stroke-width="1.8" stroke-linecap="round" stroke-linejoin="round"/></svg>
<div class="b" style="left:789px;top:428.5px;width:226px;height:31.5px;background:#323232;border:1px solid #4a4a4a;border-radius:4px;"></div>
<div class="t" style="left:801.8px;top:438.1px;font-size:14px;color:#e6e6e6;transform:scaleX(0.890);">Bianco</div>
<svg class="b" style="left:990.3px;top:440.15px" width="12.4" height="8.2"><polyline points="2,2 6.2,6.2 10.4,2" fill="none" stroke="#d0d0d0" stroke-width="1.8" stroke-linecap="round" stroke-linejoin="round"/></svg>
<div class="b" style="left:1027px;top:428.5px;width:32px;height:31.5px;background:#ffffff;border-radius:2px;"></div>
<div class="b" style="left:789px;top:520px;width:270px;height:32px;background:#323232;border:1px solid #4a4a4a;border-radius:4px;"></div>
<div class="t" style="left:801.8px;top:529.9px;font-size:14px;color:#e6e6e6;transform:scaleX(0.867);">ISO Coated v2 300% (ECI)</div>
<svg class="b" style="left:1034.5px;top:531.9px" width="12.4" height="8.2"><polyline points="2,2 6.2,6.2 10.4,2" fill="none" stroke="#d0d0d0" stroke-width="1.8" stroke-linecap="round" stroke-linejoin="round"/></svg>
<div class="b" style="left:789px;top:580.5px;width:270px;height:31.0px;background:#323232;border:1px solid #4a4a4a;border-radius:4px;"></div>
<div class="t" style="left:801.8px;top:589.7px;font-size:14px;color:#e6e6e6;transform:scaleX(0.909);">Pixel quadrati</div>
<svg class="b" style="left:1034.5px;top:591.9px" width="12.4" height="8.2"><polyline points="2,2 6.2,6.2 10.4,2" fill="none" stroke="#d0d0d0" stroke-width="1.8" stroke-linecap="round" stroke-linejoin="round"/></svg>
<svg class="b" style="left:873px;top:246px" width="24" height="27"><rect x="1" y="1" width="22" height="25" fill="none" stroke="#b5b5b5" stroke-width="1.6"/><circle cx="12" cy="8" r="3.6" fill="#b5b5b5"/><path d="M5.5,24 L5.5,16.5 Q5.5,13 9,13 L15,13 Q18.5,13 18.5,16.5 L18.5,24 Z" fill="#b5b5b5"/></svg>
<svg class="b" style="left:903px;top:248px" width="27" height="22"><rect x="1" y="1" width="25" height="20" fill="none" stroke="#378ef0" stroke-width="1.6"/><circle cx="13.5" cy="7" r="3.3" fill="#378ef0"/><path d="M7,19.5 L7,14 Q7,11.5 10,11.5 L17,11.5 Q20,11.5 20,14 L20,19.5 Z" fill="#378ef0"/></svg>
<div class="b" style="left:953px;top:251.5px;width:16px;height:16.0px;background:#404040;border:1px solid #555;border-radius:3px;"></div>
<svg class="b" style="left:788.7px;top:473.55px" width="13" height="8.5"><polyline points="2,2 6.5,6.5 11,2" fill="none" stroke="#cfcfcf" stroke-width="1.8" stroke-linecap="round" stroke-linejoin="round"/></svg>
<div class="b" style="left:782px;top:158px;width:85px;height:62px;border:2px solid #ff0000;"></div>
<div class="b" style="left:782px;top:222px;width:85px;height:59px;border:2px solid #ff0000;"></div>
<div class="b" style="left:782px;top:282.5px;width:85px;height:59.5px;border:2px solid #ff0000;"></div>
<div class="b" style="left:782px;top:498px;width:284px;height:59px;border:2px solid #ff0000;"></div>
<div class="b" style="left:899px;top:659px;width:72px;height:32px;background:#1473e6;border-radius:16px;"></div>
<div class="t" style="left:920.8px;top:667.8px;font-size:14.5px;color:#ffffff;font-weight:bold;transform:scaleX(0.797);">Crea</div>
<div class="b" style="left:987px;top:659px;width:72px;height:32px;border:2px solid #dcdcdc;border-radius:16px;"></div>
<div class="t" style="left:1003.5px;top:667.8px;font-size:14.5px;color:#dadada;font-weight:bold;transform:scaleX(0.827);">Chiudi</div>
</body></html>
